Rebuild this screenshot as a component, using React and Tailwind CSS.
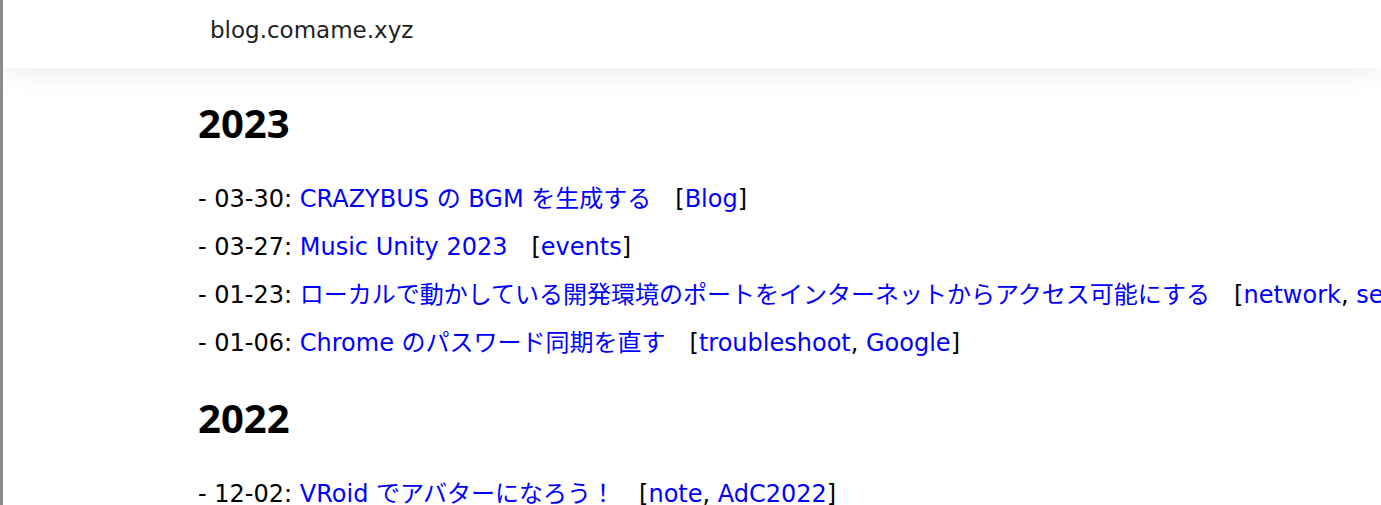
import React from 'react';

const years = [
  {
    year: '2023',
    posts: [
      { date: '03-30', title: 'CRAZYBUS の BGM を生成する', tags: ['Blog'] },
      { date: '03-27', title: 'Music Unity 2023', tags: ['events'] },
      { date: '01-23', title: 'ローカルで動かしている開発環境のポートをインターネットからアクセス可能にする', tags: ['network', 'security'] },
      { date: '01-06', title: 'Chrome のパスワード同期を直す', tags: ['troubleshoot', 'Google'] },
    ],
  },
  {
    year: '2022',
    posts: [
      { date: '12-02', title: 'VRoid でアバターになろう！', tags: ['note', 'AdC2022'] },
    ],
  },
];

const PostRow = ({ post }) => (
  <li className="leading-[48px] text-black">
    - {post.date}:{' '}
    <a href="#" className="text-[#0000ff]">{post.title}</a>
    <span className="ml-6">
      [
      {post.tags.map((tag, i) => (
        <React.Fragment key={tag}>
          {i > 0 && ', '}
          <a href="#" className="text-[#0000ff]">{tag}</a>
        </React.Fragment>
      ))}
      ]
    </span>
  </li>
);

export default function App() {
  return (
    <div
      className="min-h-[505px] bg-white border-l-[3px] border-[#8c8c8c] overflow-hidden whitespace-nowrap text-[24px]"
      style={{ fontFamily: '"DejaVu Sans", "Noto Sans CJK JP", sans-serif' }}
    >
      {/* Header */}
      <header className="relative z-10 h-[68px] bg-white flex items-center pl-[207px] pb-[8px] shadow-[0_4px_28px_rgba(0,0,0,0.08)]">
        <span className="text-[23px] text-[#222]">blog.comame.xyz</span>
      </header>

      {/* Archive */}
      <main className="pl-[195px] pt-[31px]">
        {years.map((y, idx) => (
          <section key={y.year} className={idx > 0 ? 'mt-[27px]' : ''}>
            <h2
              className="text-[40px] leading-[48px] font-bold text-black"
              style={{ fontFamily: '"Noto Sans", sans-serif' }}
            >
              {y.year}
            </h2>
            <ul className="mt-[28px]">
              {y.posts.map((post) => (
                <PostRow key={post.date + post.title} post={post} />
              ))}
            </ul>
          </section>
        ))}
      </main>
    </div>
  );
}
